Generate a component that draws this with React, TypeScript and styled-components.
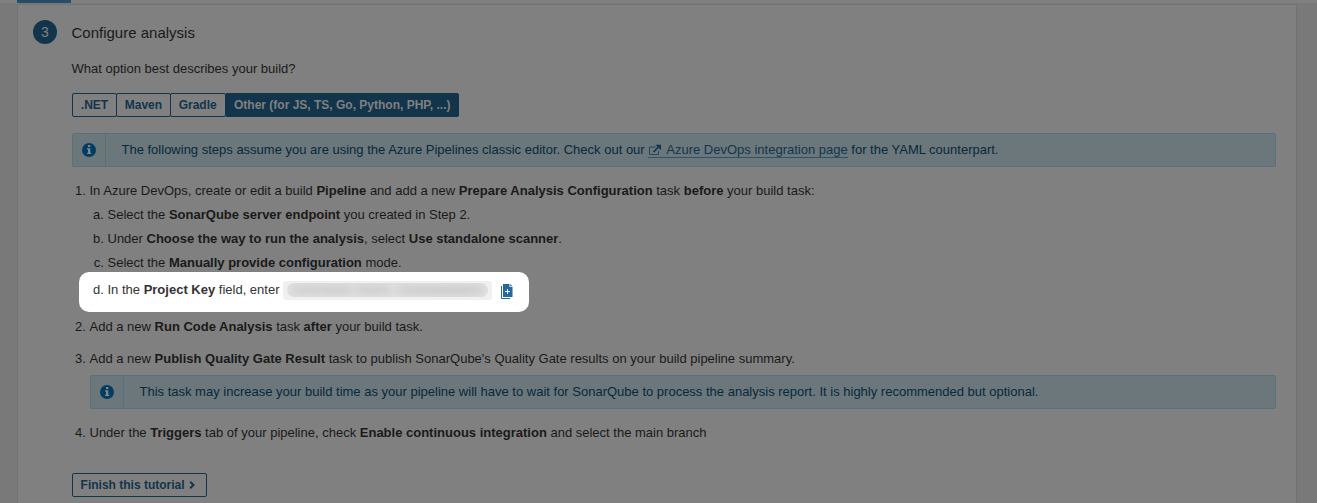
import React from 'react';
import styled, { createGlobalStyle } from 'styled-components';

const GlobalStyle = createGlobalStyle`
  * { box-sizing: border-box; }
  body {
    margin: 0;
    background: #797979;
    font: 13px/24px 'Liberation Sans', Arial, sans-serif;
    color: #1a1a1a;
  }
`;

const Page = styled.div`
  height: 503px;
  overflow: hidden;
`;

const TabStrip = styled.div`
  height: 3px;
  margin-bottom: 1px;
  padding-left: 17px;
  background: #808080;
`;

const ActiveTab = styled.div`
  width: 54px;
  height: 3px;
  background: #264c66;
`;

const Card = styled.main`
  display: flex;
  align-items: flex-start;
  width: 1280px;
  height: 520px;
  margin-left: 17px;
  padding: 15px 20px 0 15px;
  border: 1px solid #737373;
  background: #808080;
`;

const StepNumber = styled.div`
  width: 24px;
  height: 24px;
  margin-right: 15px;
  border-radius: 50%;
  background: #12354c;
  color: #808080;
  font-size: 14px;
  text-align: center;
`;

const Content = styled.div`
  flex: 1;
  min-width: 0;
  white-space: nowrap;
`;

const Title = styled.h2`
  margin: 1px 0 12px -0.5px;
  font-size: 15px;
  font-weight: 400;
  line-height: 24px;
`;

const Question = styled.p`
  margin: 0 0 12px -0.5px;
`;

const ButtonGroup = styled.div`
  display: flex;
  margin-bottom: 16px;
`;

const Button = styled.button<{ $active?: boolean }>`
  display: flex;
  align-items: center;
  height: 24px;
  margin: 0;
  padding: ${(p) => (p.$active ? '0 8px 0 8.5px' : '0 7.8px')};
  border: 1px solid #12354c;
  border-radius: 2px;
  background: ${(p) => (p.$active ? '#12354c' : 'transparent')};
  color: ${(p) => (p.$active ? '#808080' : '#12354c')};
  font: bold 12px/22px 'Liberation Sans', Arial, sans-serif;
  & + & { margin-left: -1px; }
`;

const AlertBox = styled.div`
  display: flex;
  height: 34px;
  border: 1px solid #58727d;
  border-radius: 2px;
  background: #6c777c;
  color: #07293b;
  line-height: 32px;
`;

const AlertIcon = styled.div`
  display: flex;
  align-items: center;
  justify-content: center;
  width: 33px;
  border-right: 1px solid #58727d;
`;

const AlertText = styled.div`
  padding-left: 15.5px;
`;

const Link = styled.a`
  display: inline-block;
  height: 16px;
  line-height: 16px;
  border-bottom: 1px solid #2f536a;
  color: #12354c;
  svg { margin-right: 4px; vertical-align: -3px; }
`;

const Steps = styled.ol`
  margin: 12px 0 0;
  padding: 0;
  list-style: none;
`;

const Step = styled.li<{ $gap?: number }>`
  margin-top: ${(p) => p.$gap ?? 0}px;
`;

const Row = styled.div`
  display: flex;
  height: 24px;
`;

const Marker = styled.span`
  width: 17.5px;
  text-align: right;
  white-space: pre;
`;

const Nested = styled.div<{ $gap?: number }>`
  margin: ${(p) => p.$gap ?? 0}px 0 0 18px;
`;

const Spotlight = styled.div`
  position: relative;
  display: flex;
  width: 450px;
  height: 40px;
  margin: -3px 0 0 -11px;
  padding: 6px 0 0 11px;
  border-radius: 10px;
  background: #fff;
  color: #333;
`;

const FieldText = styled.span`
  width: 175.5px;
`;

const KeyValue = styled.code`
  display: flex;
  align-items: center;
  width: 209px;
  height: 19px;
  margin: 3px 9px 0 0;
  padding: 0 4px 1px;
  border-radius: 3px;
  background: #f0f0f0;
`;

const Redaction = styled.span`
  width: 201px;
  height: 14px;
  overflow: hidden;
  border-radius: 7px;
  background: #dfdfdf;
`;

const Smudge = styled.span`
  display: block;
  height: 8px;
  margin: 3px 6px;
  filter: blur(3px);
  background: linear-gradient(90deg, #d2d2d2 0, #cecece 28%, #dadada 32%, #cecece 37%, #cfcfcf 48%, #dcdcdc 53%, #cecece 60%, #cbcbcb 90%, #d2d2d2 100%);
`;

const CopyIcon = styled.svg`
  margin-top: 6px;
`;

const Finish = styled(Button)`
  width: 135px;
  margin-top: 28px;
  padding-left: 7.6px;
  svg { margin-left: 4px; }
`;

const InfoIcon = () => (
  <svg width="14" height="14" viewBox="0 0 14 14">
    <circle cx="7" cy="7" r="7" fill="#023c61" />
    <path d="M6 2h2.3v2H6zM5 5.3h3.3v4.4h1V11H5V9.7h1V6.6H5z" fill="#7b898f" />
  </svg>
);

const ExternalIcon = () => (
  <svg width="14" height="14" viewBox="0 0 14 14" fill="none" stroke="#12354c">
    <path d="M7.5 4h-6v7.5h9V8" opacity=".75" />
    <path d="M5.5 9L11 3.5" strokeWidth="1.7" />
    <path d="M7.5 1.7H13v5.5z" fill="#12354c" stroke="none" />
  </svg>
);

const Alert = ({ children }: { children: React.ReactNode }) => (
  <AlertBox>
    <AlertIcon><InfoIcon /></AlertIcon>
    <AlertText>{children}</AlertText>
  </AlertBox>
);

const Line = ({ mark, children }: { mark: string; children: React.ReactNode }) => (
  <Row>
    <Marker>{mark + '. '}</Marker>
    <span>{children}</span>
  </Row>
);

export default function App() {
  return (
    <Page>
      <GlobalStyle />
      <TabStrip><ActiveTab /></TabStrip>
      <Card>
        <StepNumber>3</StepNumber>
        <Content>
          <Title>Configure analysis</Title>
          <Question>What option best describes your build?</Question>
          <ButtonGroup>
            <Button>.NET</Button>
            <Button>Maven</Button>
            <Button>Gradle</Button>
            <Button $active>Other (for JS, TS, Go, Python, PHP, ...)</Button>
          </ButtonGroup>
          <Alert>
            The following steps assume you are using the Azure Pipelines classic editor. Check out our{' '}
            <Link><ExternalIcon />Azure DevOps integration page</Link> for the YAML counterpart.
          </Alert>
          <Steps>
            <Step>
              <Line mark="1">
                In Azure DevOps, create or edit a build <b>Pipeline</b> and add a new{' '}
                <b>Prepare Analysis Configuration</b> task <b>before</b> your build task:
              </Line>
              <Nested>
                <Line mark="a">Select the <b>SonarQube server endpoint</b> you created in Step 2.</Line>
                <Line mark="b">Under <b>Choose the way to run the analysis</b>, select <b>Use standalone scanner</b>.</Line>
                <Line mark="c">Select the <b>Manually provide configuration</b> mode.</Line>
                <Spotlight>
                  <Marker>{'d. '}</Marker>
                  <FieldText>In the <b>Project Key</b> field, enter</FieldText>
                  <KeyValue><Redaction><Smudge /></Redaction></KeyValue>
                  <CopyIcon width="12" height="15" viewBox="0 0 12 15">
                    <path d="M.5 2v12.5H9" fill="none" stroke="#236a97" />
                    <path d="M2 0h6.5v3h3v10H2z" fill="#236a97" />
                    <path d="M9.3 0l2.2 2.2H9.3z" fill="#236a97" />
                    <path d="M6.5 5v5M4 7.5h5" stroke="#fff" />
                  </CopyIcon>
                </Spotlight>
              </Nested>
            </Step>
            <Step $gap={3}>
              <Line mark="2">Add a new <b>Run Code Analysis</b> task <b>after</b> your build task.</Line>
            </Step>
            <Step $gap={8}>
              <Line mark="3">
                Add a new <b>Publish Quality Gate Result</b> task to publish SonarQube's Quality Gate results on your build pipeline summary.
              </Line>
              <Nested $gap={4}>
                <Alert>
                  This task may increase your build time as your pipeline will have to wait for SonarQube to process the analysis report. It is highly recommended but optional.
                </Alert>
              </Nested>
            </Step>
            <Step $gap={12}>
              <Line mark="4">
                Under the <b>Triggers</b> tab of your pipeline, check <b>Enable continuous integration</b> and select the main branch
              </Line>
            </Step>
          </Steps>
          <Finish>
            Finish this tutorial
            <svg width="7" height="8" viewBox="0 0 7 8" fill="none" stroke="#12354c" strokeWidth="2">
              <path d="M1.2 .8L4.5 4 1.2 7.2" />
            </svg>
          </Finish>
        </Content>
      </Card>
    </Page>
  );
}
